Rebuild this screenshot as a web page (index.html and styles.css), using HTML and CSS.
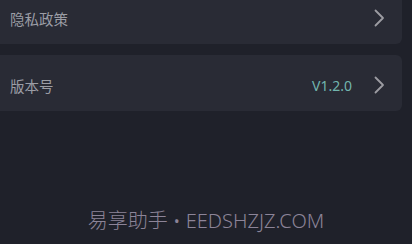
FILE: index.html
```html
<!DOCTYPE html>
<html lang="zh-CN">
<head>
<meta charset="utf-8">
<link rel="stylesheet" href="styles.css">
</head>
<body>
<div class="page">
  <div class="list">
    <div class="card">
      <span class="label">隐私政策</span>
      <div class="right">
        <svg class="chev" width="12" height="20" viewBox="0 0 12 20"><path d="M2.5 2.5 L10 10 L2.5 17.5" fill="none" stroke="currentColor" stroke-width="1.8" stroke-linecap="round" stroke-linejoin="round"/></svg>
      </div>
    </div>
    <div class="card">
      <span class="label">版本号</span>
      <div class="right">
        <span class="version">V1.2.0</span>
        <svg class="chev" width="12" height="20" viewBox="0 0 12 20"><path d="M2.5 2.5 L10 10 L2.5 17.5" fill="none" stroke="currentColor" stroke-width="1.8" stroke-linecap="round" stroke-linejoin="round"/></svg>
      </div>
    </div>
  </div>
  <div class="footer">易享助手 • EEDSHZJZ.COM</div>
</div>
</body>
</html>
```
FILE: styles.css
```css
html, body {
  margin: 0;
  padding: 0;
  background: #1f212a;
}
body {
  font-family: "Noto Sans", "Noto Sans CJK SC", sans-serif;
}
.page {
  height: 244px;
  display: flex;
  flex-direction: column;
  overflow: hidden;
}
.list {
  display: flex;
  flex-direction: column;
  gap: 11px;
  margin-top: -12px;
  padding-right: 10px;
}
.card {
  height: 56px;
  background: #292b35;
  border-radius: 0 6px 6px 0;
  display: flex;
  align-items: center;
  justify-content: space-between;
  padding: 0 17px 0 10px;
  box-sizing: border-box;
}
.label {
  font-size: 14.5px;
  color: #9b9da5;
  margin-top: 4px;
}
.right {
  display: flex;
  align-items: center;
  gap: 21px;
  margin-top: 4px;
}
.version {
  font-size: 14px;
  color: #72b5ae;
}
.chev {
  color: #9c9ca2;
  display: block;
}
.footer {
  margin-top: auto;
  margin-bottom: 9px;
  text-align: center;
  font-size: 20px;
  color: #8c8498;
  line-height: 28px;
  font-weight: 300;
}
```
